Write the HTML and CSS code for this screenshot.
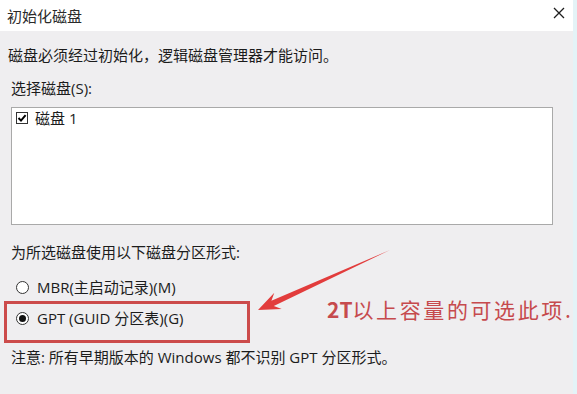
FILE: index.html
```html
<!DOCTYPE html>
<html lang="zh-CN">
<head>
<meta charset="utf-8">
<title>初始化磁盘</title>
<link rel="stylesheet" href="styles.css">
</head>
<body>
<div class="screen">
  <div class="window">
    <div class="titlebar">
      <span class="title">初始化磁盘</span>
      <svg class="close" width="12" height="12" viewBox="0 0 12 12"><path d="M1 1 L11 11 M11 1 L1 11" stroke="#1e1e1e" stroke-width="1.3" fill="none"/></svg>
    </div>
    <div class="content">
      <p class="line intro">磁盘必须经过初始化，逻辑磁盘管理器才能访问。</p>
      <p class="line label">选择磁盘(S):</p>
      <div class="listbox">
        <div class="item">
          <svg class="checkbox" width="12" height="12" viewBox="0 0 12 12"><rect x="0.5" y="0.5" width="11" height="11" fill="#fff" stroke="#333"/><path d="M2.5 6 L5 8.6 L9.6 3.2" stroke="#000" stroke-width="2" fill="none"/></svg>
          <span>磁盘 1</span>
        </div>
      </div>
      <p class="line style-label">为所选磁盘使用以下磁盘分区形式:</p>
      <div class="option mbr"><span class="radio"></span><span>MBR(主启动记录)(M)</span></div>
      <div class="option gpt"><span class="radio checked"></span><span>GPT (GUID 分区表)(G)</span></div>
      <p class="line note">注意: 所有早期版本的 Windows 都不识别 GPT 分区形式。</p>
    </div>
  </div>
  <div class="edge"></div>
  <svg class="arrow" width="577" height="394" viewBox="0 0 577 394">
    <polygon points="258,310 274.3,292.7 271.4,300.7 390,250 273.8,306.1 281.7,309.1" fill="#e23c3c"/>
  </svg>
  <div class="annotation"><b>2T</b>以上容量的可选此项.</div>
</div>
</body>
</html>
```
FILE: styles.css
```css
* { box-sizing: border-box; }
html, body { margin: 0; padding: 0; }
body {
  width: 577px;
  height: 394px;
  overflow: hidden;
  font-family: "Open Sans", "Noto Sans CJK SC", sans-serif;
  font-size: 15px;
  color: #1c1c1c;
}
.screen {
  position: relative;
  display: flex;
  width: 577px;
  height: 394px;
}
.window {
  flex: 1;
  display: flex;
  flex-direction: column;
  background: #efeef0;
}
.edge {
  width: 4px;
  background: #e4f3f7;
}
.titlebar {
  height: 31px;
  background: #ffffff;
  display: flex;
  align-items: center;
  justify-content: space-between;
  padding: 0 8px 0 7px;
}
.title {
  line-height: 20px;
  color: #2a2a2a;
}
.close { display: block; margin-top: -6px; }
.content {
  padding: 0 20px 0 11px;
  display: flex;
  flex-direction: column;
}
.line {
  margin: 0;
  line-height: 20px;
  white-space: nowrap;
}
.intro { margin-top: 14px; margin-left: -3px; }
.label { margin-top: 13px; }
.listbox {
  margin-top: 9px;
  height: 118px;
  background: #ffffff;
  border: 1px solid #a9a9a9;
}
.item {
  display: flex;
  align-items: center;
  height: 20px;
  padding-left: 4px;
  gap: 7px;
  line-height: 20px;
}
.checkbox { display: block; }
.style-label { margin-top: 17px; }
.option {
  display: flex;
  align-items: center;
  gap: 8px;
  line-height: 20px;
  white-space: nowrap;
}
.mbr { margin-top: 15px; height: 20px; padding-left: 5px; }
.gpt {
  margin-top: 4px;
  margin-left: -7px;
  width: 246px;
  height: 42px;
  border: 3px solid #cc4b4b;
  padding: 4px 0 12px 9px;
  align-items: flex-start;
}
.gpt .radio { margin-top: 3.5px; }
.radio {
  width: 13px;
  height: 13px;
  border-radius: 50%;
  border: 1px solid #333;
  background: #fff;
  flex: none;
  display: flex;
  align-items: center;
  justify-content: center;
}
.radio.checked::after {
  content: "";
  width: 7px;
  height: 7px;
  border-radius: 50%;
  background: #111;
}
.note { margin-top: 4px; }
.arrow {
  position: absolute;
  left: 0;
  top: 0;
  pointer-events: none;
}
.annotation {
  position: absolute;
  left: 327px;
  top: 295px;
  font-family: "Noto Sans CJK SC", sans-serif;
  font-size: 21px;
  line-height: 28px;
  letter-spacing: 2.6px;
  color: #c64a4d;
  white-space: nowrap;
}
.annotation b { font-weight: 700; letter-spacing: 0; }
```
